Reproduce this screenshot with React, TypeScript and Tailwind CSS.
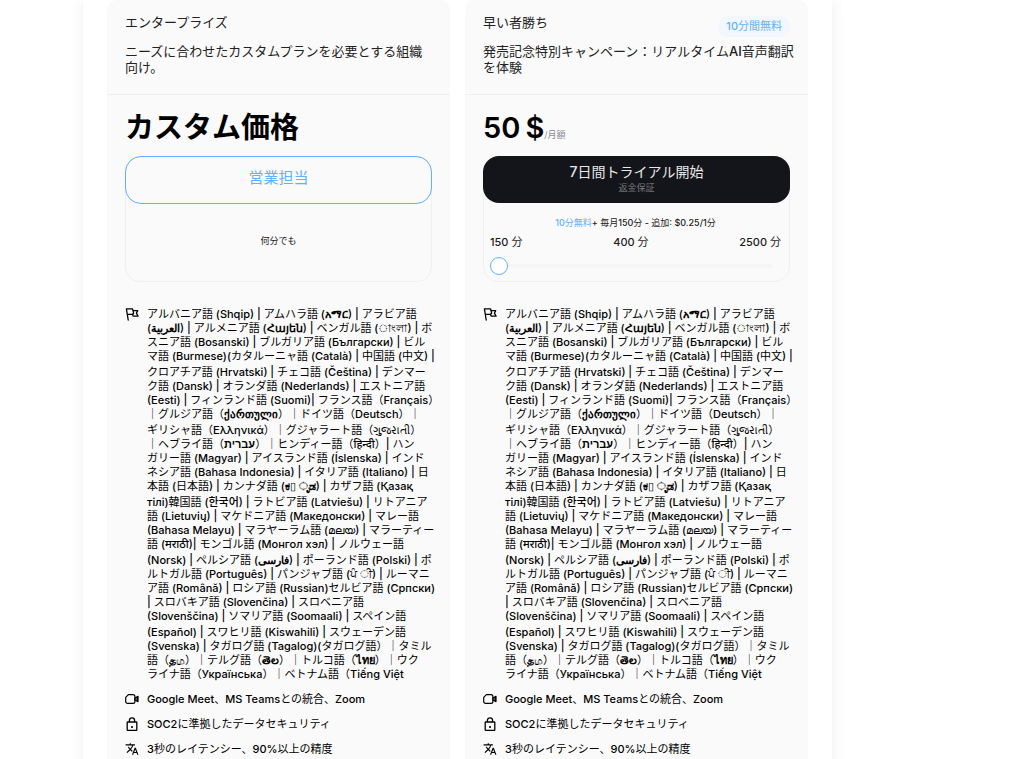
import React, { useId, useState } from 'react'
import { MdTranslate } from 'react-icons/md'

// Each group is one paragraph, each entry one line of it
const languageGroups: string[][] = [
  [
    'アルバニア語 (Shqip) | アムハラ語 (አማር) | アラビア語',
    '(العربية) | アルメニア語 (Հայեն) | ベンガル語 (াংলা) | ボ',
    'スニア語 (Bosanski) | ブルガリア語 (Български) | ビル',
    'マ語 (Burmese)(カタルーニャ語 (Català) | 中国語 (中文) |',
  ],
  [
    'クロアチア語 (Hrvatski) | チェコ語 (Čeština) | デンマー',
    'ク語 (Dansk) | オランダ語 (Nederlands) | エストニア語',
    '(Eesti) | フィンランド語 (Suomi)| フランス語（Français）',
    '｜グルジア語（ქართული）｜ドイツ語（Deutsch）｜',
  ],
  [
    'ギリシャ語（Ελληνικά）｜グジャラート語（ગુજરાતી）',
    '｜ヘブライ語（עברית）｜ヒンディー語（हिन्दी）| ハン',
    'ガリー語 (Magyar) | アイスランド語 (Íslenska) | インド',
    'ネシア語 (Bahasa Indonesia) | イタリア語 (Italiano) | 日',
    '本語 (日本語) | カンナダ語 (ಕ▯ ೃಡ) | カザフ語 (Қазақ',
  ],
  [
    'тілі)韓国語 (한국어) | ラトビア語 (Latviešu) | リトアニア',
    '語 (Lietuvių) | マケドニア語 (Македонски) | マレー語',
    '(Bahasa Melayu) | マラヤーラム語 (മലയ) | マラーティー',
    '語 (मराठी)| モンゴル語 (Монгол хэл) | ノルウェー語',
  ],
  [
    '(Norsk) | ペルシア語 (فارسی) | ポーランド語 (Polski) | ポ',
    'ルトガル語 (Português) | パンジャブ語 (ਪੰ ੀ) | ルーマニ',
    'ア語 (Română) | ロシア語 (Russian)セルビア語 (Српски)',
    '| スロバキア語 (Slovenčina) | スロベニア語',
    '(Slovenščina) | ソマリア語 (Soomaali) | スペイン語',
  ],
  [
    '(Español) | スワヒリ語 (Kiswahili) | スウェーデン語',
    '(Svenska) | タガログ語 (Tagalog)(タガログ語）｜タミル',
    '語（தம）｜テルグ語（తెల）｜トルコ語（ไทย）｜ウク',
    'ライナ語（Українська）｜ベトナム語（Tiếng Việt',
  ],
]

const SCRIPT_RUNS = /([\u2e80-\u9fff\uff00-\uffef]+|[\u0530-\u06ff\u0b80-\u0cff\u0e00-\u0e7f\u10a0-\u10ff\u1200-\u137f]+)/
const CJK_START = /^[\u2e80-\u9fff\uff00-\uffef]/
const BOLD_START = /^[\u0530-\u06ff\u0b80-\u0cff\u0e00-\u0e7f\u10a0-\u10ff\u1200-\u137f]/

// Japanese is set in regular, Latin in medium, and the scripts that look thin in bold
function Mixed({ text }: { text: string }) {
  return text
    .split(SCRIPT_RUNS)
    .filter(Boolean)
    .map((run, i) => {
      if (CJK_START.test(run)) return <React.Fragment key={i}>{run}</React.Fragment>
      return (
        <span key={i} className={BOLD_START.test(run) ? 'font-bold' : 'font-medium'}>
          {run}
        </span>
      )
    })
}

function FlagIcon() {
  return (
    <svg viewBox="0 0 14 14" className="size-[14px]" fill="none" stroke="currentColor" strokeWidth="1.3" strokeLinejoin="round" strokeLinecap="round">
      <path d="M3.2 13 1.4 1.8h6.2l.5 1.8h4.6l-1.3 2.6 1.7 2.9H8.1L7.5 7.3H2.3" />
      <path d="M8.1 3.6 8.6 6.4 7.5 7.3" />
    </svg>
  )
}

function CameraIcon() {
  return (
    <svg viewBox="0 0 14 14" className="size-[14px]" fill="none" stroke="currentColor" strokeWidth="1.2" strokeLinejoin="round">
      <path d="M3.4 2.6h4.6a1.9 1.9 0 0 1 1.9 1.9v5a1.9 1.9 0 0 1-1.9 1.9H2.6A1.9 1.9 0 0 1 .7 9.5V5.3z" />
      <path d="M10 6 13 4.4v5.2L10 8z" />
      <path d="M12.2 5v4" strokeWidth="1.6" />
    </svg>
  )
}

function LockIcon() {
  return (
    <svg viewBox="0 0 14 14" className="size-[14px]" fill="none" stroke="currentColor" strokeWidth="1.3" strokeLinejoin="round">
      <rect x="2.2" y="5" width="9.6" height="8.3" rx="0.6" />
      <path d="M4.4 5V3.4a2.6 2.6 0 0 1 5.2 0V5" />
      <path d="M7 9v2" strokeWidth="1.6" />
    </svg>
  )
}

function Feature({ icon, children }: { icon: React.ReactNode; children: React.ReactNode }) {
  return (
    <li className="flex gap-2">
      <span className="flex h-[14px] w-[14px] shrink-0 items-center">{icon}</span>
      <div className="min-w-0 flex-1 leading-[14px]">{children}</div>
    </li>
  )
}

function FeatureList() {
  return (
    <ul className="mt-[25px] flex flex-col gap-[11px] text-[11px] text-black">
      <Feature icon={<FlagIcon />}>
        <div className="flex flex-col gap-[2px]">
          {languageGroups.map((lines, i) => (
            <p key={i}>
              {lines.map((line) => (
                <span key={line} className="block whitespace-nowrap">
                  <Mixed text={line} />
                </span>
              ))}
            </p>
          ))}
        </div>
      </Feature>
      <Feature icon={<CameraIcon />}>
        <Mixed text="Google Meet、MS Teamsとの統合、Zoom" />
      </Feature>
      <Feature icon={<LockIcon />}>
        <Mixed text="SOC2に準拠したデータセキュリティ" />
      </Feature>
      <Feature icon={<MdTranslate className="size-[14px]" />}>
        <Mixed text="3秒のレイテンシー、90%以上の精度" />
      </Feature>
    </ul>
  )
}

interface PlanCardProps {
  name: string
  description: string
  badge?: string
  price: React.ReactNode
  children: React.ReactNode
}

function PlanCard({ name, description, badge, price, children }: PlanCardProps) {
  return (
    <section className="min-w-0 flex-1 rounded-t-[10px] bg-[#fafafa]">
      <header className="h-[95px] border-b border-[#eeeeee] px-[18px] pt-[14px] text-[13px] leading-4 text-[#222222]">
        <div className="flex h-[29px] items-start justify-between">
          <h2>{name}</h2>
          {badge && (
            <span className="mt-[2px] rounded-full bg-[#f1f7fd] px-2 text-[11px] leading-[21px] text-[#62b0fa]">
              <Mixed text={badge} />
            </span>
          )}
        </div>
        <p className="-mr-2 whitespace-pre-line">
          <Mixed text={description} />
        </p>
      </header>
      <div className="px-[18px] pt-[14px] pb-6">
        <div className="flex h-[47px] items-baseline text-[29px] leading-[38px] font-semibold text-black">{price}</div>
        {children}
        <FeatureList />
      </div>
    </section>
  )
}

function MinutesSlider() {
  const [minutes, setMinutes] = useState(0)
  const id = useId()

  return (
    <div className="pt-[14px] pr-2 pl-[6px] text-[#1c1c1c]">
      <label htmlFor={id} className="block text-center text-[9px] leading-3">
        <span className="text-[#62b0fa]">
          <Mixed text="10分無料" />
        </span>
        <Mixed text="+ 毎月150分 - 追加: $0.25/1分" />
      </label>
      <div className="mt-[6px] flex justify-between text-[11px] leading-[14px] whitespace-pre">
        <span>
          <Mixed text="150 分" />
        </span>
        <span>
          <Mixed text="400 分" />
        </span>
        <span>
          <Mixed text="2500 分" />
        </span>
      </div>
      <div className="mt-2 pr-2">
        <input
          id={id}
          type="range"
          min={0}
          max={2}
          value={minutes}
          onChange={(e) => setMinutes(Number(e.target.value))}
          className="block h-[18px] w-full cursor-pointer appearance-none bg-transparent [&::-webkit-slider-runnable-track]:h-1 [&::-webkit-slider-runnable-track]:rounded-full [&::-webkit-slider-runnable-track]:bg-[#f5f5f5] [&::-webkit-slider-thumb]:-mt-[7px] [&::-webkit-slider-thumb]:size-[18px] [&::-webkit-slider-thumb]:appearance-none [&::-webkit-slider-thumb]:rounded-full [&::-webkit-slider-thumb]:border [&::-webkit-slider-thumb]:border-[#62b0fa] [&::-webkit-slider-thumb]:bg-white"
        />
      </div>
    </div>
  )
}

export default function App() {
  return (
    <div className="h-screen overflow-hidden bg-white font-['Inter','Noto_Sans_CJK_JP','Noto_Sans',sans-serif] text-[#1c1c1c]">
      <main className="mr-[192px] ml-[83px] flex min-h-full gap-[15px] bg-white px-6 shadow-[0_0_14px_rgba(0,0,0,0.07)]">
        <PlanCard
          name="エンタープライズ"
          description={'ニーズに合わせたカスタムプランを必要とする組織\n向け。'}
          price="カスタム価格"
        >
          <div className="h-[126px] rounded-[15px] border border-[#f0f0f0]">
            <button
              type="button"
              className="-mx-px -mt-px block h-12 w-[calc(100%+2px)] rounded-[16px] border border-[#62b0fa] pb-[3px] text-[15px] text-[#62b0fa]"
            >
              営業担当
            </button>
            <p className="mt-[31px] text-center text-[9px] leading-3">何分でも</p>
          </div>
        </PlanCard>

        <PlanCard
          name="早い者勝ち"
          description={'発売記念特別キャンペーン：リアルタイムAI音声翻訳\nを体験'}
          badge="10分間無料"
          price={
            <>
              <span className="flex gap-[5px]">
                <span>50</span>
                <span>$</span>
              </span>
              <span className="text-[9px] font-normal text-[#8a8a92]">/月額</span>
            </>
          }
        >
          <div className="h-[126px] rounded-[15px] border border-[#f0f0f0]">
            <button
              type="button"
              className="-mx-px -mt-px flex h-[47px] w-[calc(100%+2px)] flex-col items-center rounded-[16px] bg-[#14151a] pt-[6px] text-[#e8e8e8]"
            >
              <span className="text-[14px] leading-5">
                <Mixed text="7日間トライアル開始" />
              </span>
              <span className="text-[9px] leading-3 text-[#74757a]">返金保証</span>
            </button>
            <MinutesSlider />
          </div>
        </PlanCard>
      </main>
    </div>
  )
}
